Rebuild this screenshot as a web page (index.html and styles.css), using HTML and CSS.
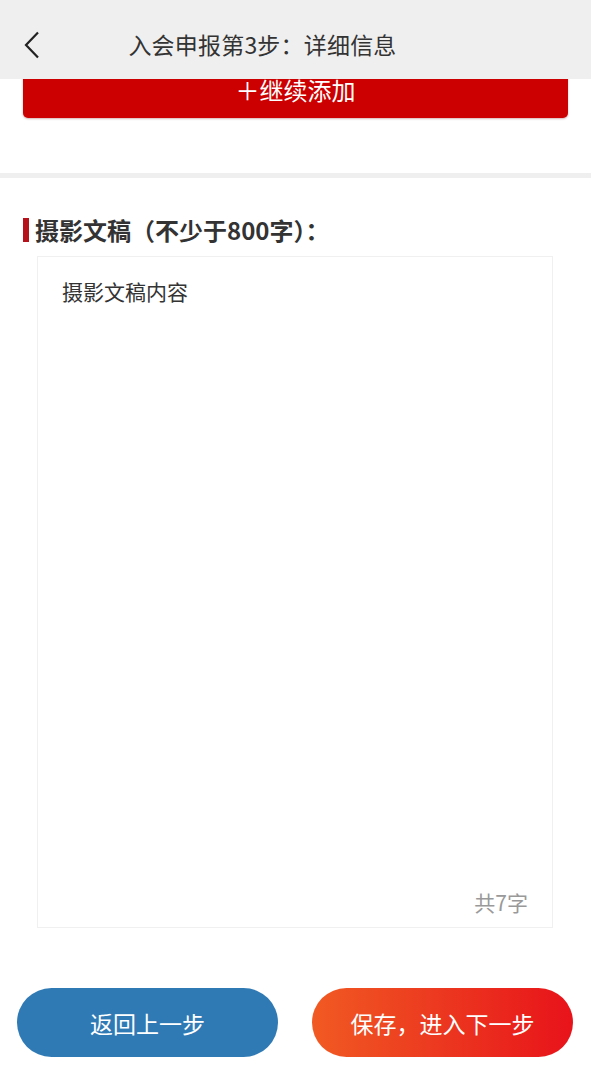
FILE: index.html
```html
<!DOCTYPE html>
<html lang="zh">
<head>
<meta charset="utf-8">
<title>入会申报第3步：详细信息</title>
<link rel="stylesheet" href="styles.css">
</head>
<body>
<header class="topbar">
  <span class="back">
    <svg width="18" height="28" viewBox="0 0 18 28"><polyline points="15,1.5 3,14 15,26.5" fill="none" stroke="#222" stroke-width="2.2" stroke-linejoin="miter"/></svg>
  </span>
  <h1 class="title">入会申报第3步：详细信息</h1>
</header>
<main class="page">
  <section class="add-section">
    <button class="add-btn">＋继续添加</button>
  </section>
  <div class="divider"></div>
  <section class="field">
    <div class="label">摄影文稿（不少于800字）：</div>
    <div class="textbox">
      <p class="content">摄影文稿内容</p>
      <span class="count">共7字</span>
    </div>
  </section>
  <div class="actions">
    <button class="btn btn-back">返回上一步</button>
    <button class="btn btn-next">保存，进入下一步</button>
  </div>
</main>
</body>
</html>
```
FILE: styles.css
```css
* { box-sizing: border-box; }
html, body { margin: 0; padding: 0; background: #fff; }
body { font-family: "Noto Sans CJK SC", "Noto Sans", sans-serif; color: #333; }

.topbar {
  position: fixed;
  top: 0; left: 0; right: 0;
  height: 79px;
  background: #efefef;
  display: flex;
  align-items: center;
  justify-content: center;
  padding: 8px 66px 0 0;
  z-index: 10;
}
.back {
  position: absolute;
  left: 23px;
  top: 31px;
  display: block;
  line-height: 0;
}
.title {
  margin: 0;
  font-size: 23px;
  font-weight: 400;
  color: #333;
  letter-spacing: 0.2px;
}

.add-section {
  padding: 62px 23px 55px 23px;
}
.add-btn {
  display: block;
  width: 100%;
  height: 56px;
  border: none;
  border-radius: 5px;
  background: #cc0000;
  color: #fff;
  font-family: inherit;
  font-size: 24px;
  padding: 0;
  line-height: 52px;
  box-shadow: 0 1px 2px rgba(120,0,0,0.3);
}

.divider {
  height: 5px;
  background: #efefef;
}

.field {
  padding: 40px 38px 0 23px;
}
.label {
  display: flex;
  align-items: center;
  height: 24px;
  font-size: 24px;
  font-weight: 700;
  color: #333;
  border-left: 6px solid #b5121b;
  padding-left: 6px;
  line-height: 24px;
}
.textbox {
  margin: 14px 0 0 14px;
  height: 672px;
  border: 1px solid #f0f0f0;
  display: flex;
  flex-direction: column;
  justify-content: space-between;
  padding: 19px 24px 10px 24px;
}
.content {
  margin: 0;
  font-size: 21px;
  color: #333;
}
.count {
  align-self: flex-end;
  font-size: 21px;
  color: #999;
}

.actions {
  display: flex;
  gap: 34px;
  padding: 60px 18px 0 17px;
}
.btn {
  flex: 1;
  height: 69px;
  border: none;
  border-radius: 35px;
  color: #fff;
  font-family: inherit;
  font-size: 23px;
  padding: 0;
}
.btn-back { background: #2f7ab5; }
.btn-next { background: linear-gradient(90deg, #f15a22 0%, #ec3b20 45%, #e8131a 100%); }
```
